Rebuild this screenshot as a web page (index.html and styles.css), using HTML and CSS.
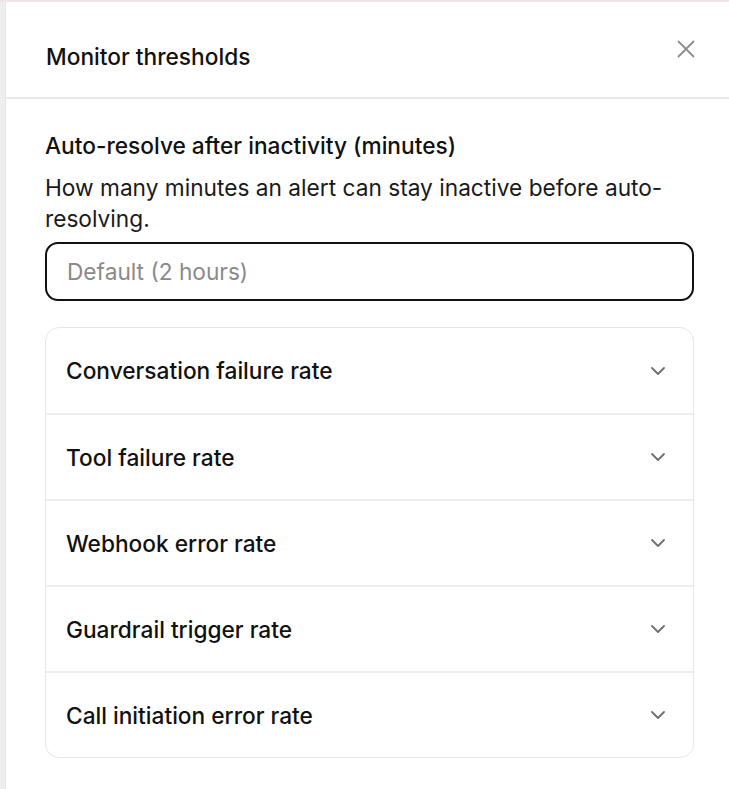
FILE: index.html
```html
<!DOCTYPE html>
<html>
<head>
<meta charset="utf-8">
<link rel="stylesheet" href="styles.css">
</head>
<body>
<div class="page">
  <div class="backdrop"></div>
  <div class="panel">
    <div class="header">
      <h2 class="title">Monitor thresholds</h2>
      <button class="close" aria-label="Close">
        <svg width="18" height="18" viewBox="0 0 18 18"><path d="M1.5 1.5 L16.5 16.5 M16.5 1.5 L1.5 16.5" stroke="#8d8d8d" stroke-width="1.8" fill="none" stroke-linecap="round"/></svg>
      </button>
    </div>
    <div class="body">
      <div class="field">
        <label class="label">Auto-resolve after inactivity (minutes)</label>
        <p class="desc">How many minutes an alert can stay inactive before auto-resolving.</p>
        <input class="input" type="text" placeholder="Default (2 hours)">
      </div>
      <div class="accordion">
        <div class="row"><span>Conversation failure rate</span><svg class="chev" width="16" height="10" viewBox="0 0 16 10"><path d="M2 2 L8 8 L14 2" stroke="#6f6f6f" stroke-width="1.8" fill="none" stroke-linecap="round" stroke-linejoin="round"/></svg></div>
        <div class="row"><span>Tool failure rate</span><svg class="chev" width="16" height="10" viewBox="0 0 16 10"><path d="M2 2 L8 8 L14 2" stroke="#6f6f6f" stroke-width="1.8" fill="none" stroke-linecap="round" stroke-linejoin="round"/></svg></div>
        <div class="row"><span>Webhook error rate</span><svg class="chev" width="16" height="10" viewBox="0 0 16 10"><path d="M2 2 L8 8 L14 2" stroke="#6f6f6f" stroke-width="1.8" fill="none" stroke-linecap="round" stroke-linejoin="round"/></svg></div>
        <div class="row"><span>Guardrail trigger rate</span><svg class="chev" width="16" height="10" viewBox="0 0 16 10"><path d="M2 2 L8 8 L14 2" stroke="#6f6f6f" stroke-width="1.8" fill="none" stroke-linecap="round" stroke-linejoin="round"/></svg></div>
        <div class="row"><span>Call initiation error rate</span><svg class="chev" width="16" height="10" viewBox="0 0 16 10"><path d="M2 2 L8 8 L14 2" stroke="#6f6f6f" stroke-width="1.8" fill="none" stroke-linecap="round" stroke-linejoin="round"/></svg></div>
      </div>
    </div>
  </div>
</div>
</body>
</html>
```
FILE: styles.css
```css
* { box-sizing: border-box; }
html, body { margin: 0; padding: 0; background: #fff; }
body { font-family: Inter, "Noto Sans", sans-serif; color: #111; }
.page { display: flex; width: 729px; height: 789px; border-top: 2px solid #f1e4e8; overflow: hidden; }
.backdrop { width: 6px; flex: none; background: #eeeeee; border-right: 1px solid #e6e6e6; }
.panel { flex: 1; display: flex; flex-direction: column; background: #fff; }
.header { display: flex; align-items: center; justify-content: space-between; height: 97px; padding: 0 34px 0 40px; border-bottom: 2px solid #e8e8e8; }
.title { margin: 0; font-size: 22.7px; font-weight: 450; color: #111; padding-top: 14px; }
.close { border: none; background: none; padding: 0; width: 18px; height: 18px; display: flex; margin-top: -2px; }
.body { padding: 31px 35px 0 39px; }
.field { display: flex; flex-direction: column; }
.label { font-size: 22.7px; font-weight: 450; line-height: 31px; color: #111; }
.desc { margin: 11px 0 8px; font-size: 22.7px; line-height: 31px; color: #1a1a1a; font-weight: 400; }
.input { height: 59px; border: 2px solid #111; border-radius: 13px; padding: 0 20px; font-family: inherit; font-size: 22.7px; color: #111; outline: none; }
.input::placeholder { color: #8a8a8a; }
.accordion { margin-top: 26px; border: 1px solid #e6e6e6; border-radius: 14px; }
.row { display: flex; align-items: center; justify-content: space-between; height: 86px; padding: 0 27px 0 20px; border-top: 2px solid #ededed; font-size: 22.7px; font-weight: 450; color: #111; }
.row:first-child { border-top: none; height: 85px; }
.chev { flex: none; }
```
